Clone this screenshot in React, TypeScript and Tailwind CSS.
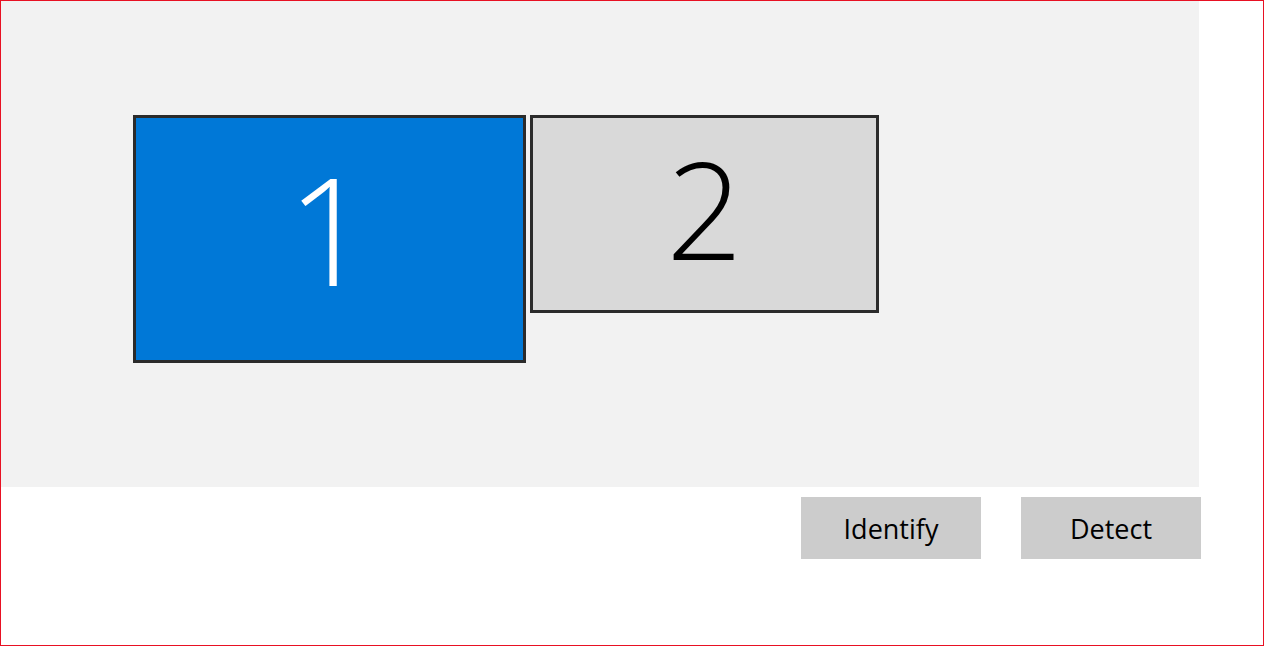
import React from 'react';

const MonitorBox = ({
  label,
  selected,
  w,
  h,
  text,
}: {
  label: string;
  selected?: boolean;
  w: string;
  h: string;
  text: string;
}) => (
  <div
    className={`${w} ${h} shrink-0 border-[3px] border-[#2b2b2b] flex items-center justify-center ${
      selected ? 'bg-[#0078d7] text-white' : 'bg-[#d9d9d9] text-black'
    }`}
  >
    <span className={`${text} leading-none font-light`} style={{ fontFamily: '"Open Sans", "Noto Sans", sans-serif' }}>
      {label}
    </span>
  </div>
);

const App = () => {
  return (
    <div className="w-[1264px] h-[646px] border border-[#e81123] bg-white" style={{ fontFamily: '"Open Sans", "Noto Sans", sans-serif' }}>
      {/* Display arrangement canvas */}
      <div className="w-[1198px] h-[486px] bg-[#f2f2f2] flex items-start gap-[4px] pl-[132px] pt-[114px]">
        <MonitorBox label="1" selected w="w-[393px]" h="h-[248px]" text="text-[150px] pb-[22px]" />
        <MonitorBox label="2" w="w-[349px]" h="h-[198px]" text="text-[134px] pb-[12px]" />
      </div>

      <div className="flex gap-[40px] pl-[800px] pt-[10px]">
        <button className="w-[180px] h-[62px] bg-[#cccccc] text-[27px] text-black pt-[3px]">Identify</button>
        <button className="w-[180px] h-[62px] bg-[#cccccc] text-[27px] text-black pt-[3px]">Detect</button>
      </div>
    </div>
  );
};

export default App;
